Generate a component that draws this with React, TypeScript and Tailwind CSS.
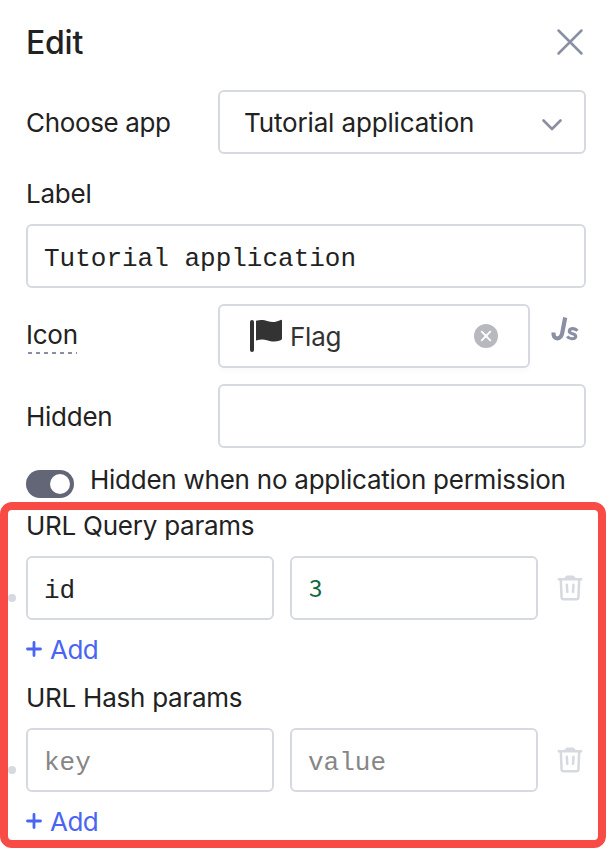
import React from "react";

const field = "h-16 rounded-md border-2 border-[#d7d9e0] bg-white";
const mono = "font-['Liberation_Mono',monospace] text-[26px] leading-[30px] tracking-normal";

function Trash() {
  return (
    <svg width="26" height="26" viewBox="0 0 26 26" fill="none" stroke="#d7d9e0" strokeWidth="2.5" strokeLinecap="round" strokeLinejoin="round">
      <path d="M1.8 4.2H24.2M8.3 3.8L10 1.8H16L17.7 3.8M3.8 4.4L4.6 23Q4.7 24.2 6 24.2H20Q21.3 24.2 21.4 23L22.2 4.4M9.8 9.8L10.3 17M16.5 9.8L16 17" />
    </svg>
  );
}

type ParamsProps = { title: string; left: string; right: string; filled?: boolean };

function Params({ title, left, right, filled }: ParamsProps) {
  return (
    <section className="h-[172px]">
      <h2 className="flex h-[52px] items-start pt-[6px] leading-8">{title}</h2>
      <div className="-ml-[18px] flex items-center">
        <span className="mt-5 mr-[10px] size-2 rounded-full bg-[#d7d9e0]" />
        <div className={`${field} ${mono} flex w-[248px] items-center pl-4 pt-[5px] ${filled ? "" : "text-[#868686]"}`}>{left}</div>
        <div className={`${field} ${mono} ml-4 flex w-[248px] items-center pl-4 ${filled ? "pb-[2px] text-[#116644]" : "pt-[5px] text-[#868686]"}`}>
          {filled ? <span className="pl-[1px] font-['Noto_Sans_CJK_SC',sans-serif] text-[24px]">{right}</span> : right}
        </div>
        <span className="ml-[19px]"><Trash /></span>
      </div>
      <button className="mt-[14px] flex h-8 items-center text-[#4965f2]">
        <svg width="16" height="16" viewBox="0 0 16 16" className="mr-[8px] -mt-[2px]" fill="none" stroke="currentColor" strokeWidth="2.8" strokeLinecap="round">
          <path d="M1.5 8H14.5M8 1.5V14.5" />
        </svg>
        <span className="tracking-[-0.5px]">Add</span>
      </button>
    </section>
  );
}

export default function App() {
  return (
    <main className="relative h-[864px] w-[612px] overflow-hidden bg-white pl-[26px] pr-[26px] font-[Inter,sans-serif] text-[26px] leading-8 tracking-[-0.25px] text-[#222222]">
      <header className="flex h-[90px] items-center justify-between pb-[5px]">
        <h1 className="pt-[1px] text-[32px] font-medium leading-10">Edit</h1>
        <svg width="28" height="28" viewBox="0 0 28 28" className="-mt-[1px] mr-[2px]" fill="none" stroke="#8b8fa3" strokeWidth="2.5" strokeLinecap="round">
          <path d="M2.5 2.5L25.5 25.5M25.5 2.5L2.5 25.5" />
        </svg>
      </header>
      <div className="flex items-center">
        <span className="w-[192px] pt-[2px] tracking-[-0.35px]">Choose app</span>
        <div className={`${field} flex w-[368px] items-center justify-between pl-[24px] pr-[21px]`}>
          <span className="pt-[2px] tracking-[-0.15px]">Tutorial application</span>
          <svg width="22" height="14" viewBox="0 0 22 14" className="mt-[5px]" fill="none" stroke="#8b8fa3" strokeWidth="2.6" strokeLinecap="round" strokeLinejoin="round">
            <path d="M2.5 2.5L11 11L19.5 2.5" />
          </svg>
        </div>
      </div>
      <div className="flex h-[70px] items-center pt-[10px]">Label</div>
      <div className={`${field} ${mono} flex w-[560px] items-center pl-4 pt-[5px]`}>Tutorial application</div>
      <div className="mt-4 flex items-center">
        <div className="flex w-[192px]">
          <span className="flex h-[38px] flex-col">
            <span className="h-8 pt-[2px] leading-8">Icon</span>
            <svg width="51" height="2" className="mt-[3px]"><path d="M2 1H51" stroke="#8b8fa3" strokeWidth="2" strokeDasharray="4 4" /></svg>
          </span>
        </div>
        <div className={`${field} flex w-[312px] items-center pl-[28px] pr-[30px] shadow-[0_4px_4px_rgba(0,0,0,0.02)]`}>
          <svg width="34" height="34" viewBox="0 0 34 34" className="mr-[8px]" fill="#333333">
            <rect x="2" y="1" width="4" height="32" rx="2" />
            <path d="M8 1.7C13 .4 16 1 20 2.2S28 3.2 32 1.2Q34 .2 34 2V19.5Q34 21 32 21.6C27 23.2 23 22.5 19 21.3S12 20.6 8 21.6Z" />
          </svg>
          <span className="pt-[2px] text-[#333333]">Flag</span>
          <svg width="24" height="24" viewBox="0 0 24 24" className="ml-auto" fill="none">
            <circle cx="12" cy="12" r="12" fill="#b8b9bf" />
            <path d="M7.7 7.7L16.3 16.3M16.3 7.7L7.7 16.3" stroke="white" strokeWidth="1.9" strokeLinecap="round" />
          </svg>
        </div>
        <svg width="30" height="26" viewBox="0 0 30 26" className="mb-3 ml-[20px]" fill="none" stroke="#8b8fa3" strokeWidth="4.2">
          <path d="M15.2 .5L12.3 15.5Q11.3 21.5 7.2 21.3Q3 21.1 3.6 15.5" />
          <path strokeWidth="3.1" d="M27.5 13.7Q25.5 11.5 22.8 11.6C18.6 11.8 18 15.4 21.9 16.4C27.3 17.6 26.7 21.6 22.1 21.7Q19 21.9 17.2 19.4" />
        </svg>
      </div>
      <div className="mt-4 flex items-center">
        <span className="w-[192px] pt-[2px]">Hidden</span>
        <div className={`${field} w-[368px]`} />
      </div>
      <div className="flex h-[56px] items-start pt-4">
        <span className="mt-[6px] flex h-7 w-12 items-center justify-end rounded-full bg-[#636676] pr-1">
          <span className="size-5 rounded-full bg-white" />
        </span>
        <span className="ml-4">Hidden when no application permission</span>
      </div>
      <Params title="URL Query params" left="id" right="3" filled />
      <Params title="URL Hash params" left="key" right="value" />
      <div className="pointer-events-none absolute left-0 top-[502px] h-[346px] w-[606px] rounded-xl border-8 border-[#f84b46]" />
    </main>
  );
}
